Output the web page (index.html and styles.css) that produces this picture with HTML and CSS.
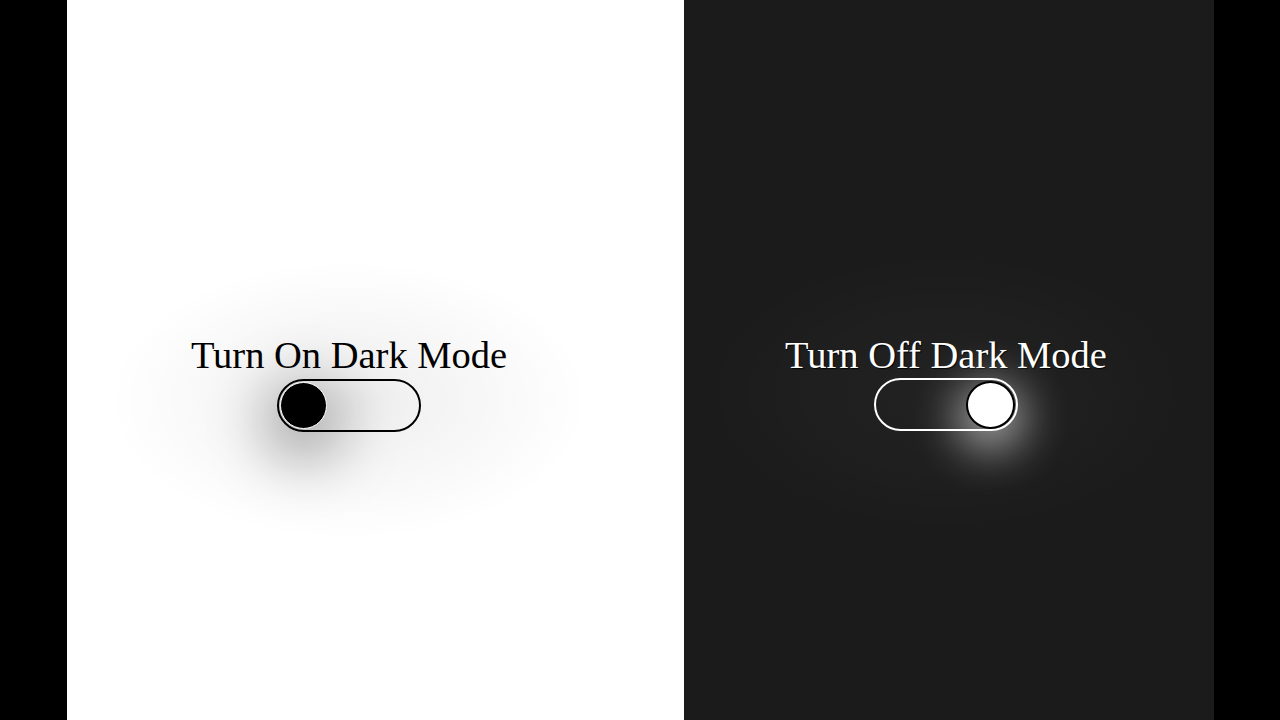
FILE: index.html
```html
<!DOCTYPE html>
<html>
<head>
<meta charset="utf-8">
<link rel="stylesheet" href="styles.css">
</head>
<body>
<div class="stage">
  <section class="panel light">
    <div class="box">
      <div class="label">Turn On Dark Mode</div>
      <div class="track"><div class="knob"></div></div>
    </div>
  </section>
  <section class="panel dark">
    <div class="box">
      <div class="label">Turn Off Dark Mode</div>
      <div class="track"><div class="knob"></div></div>
    </div>
  </section>
</div>
</body>
</html>
```
FILE: styles.css
```css
html, body {
  margin: 0;
  padding: 0;
  background: #000;
  width: 1280px;
  height: 720px;
  overflow: hidden;
}
.stage {
  display: flex;
  height: 720px;
  padding-left: 67px;
}
.panel {
  height: 720px;
  display: flex;
  justify-content: center;
  align-items: flex-start;
  padding-top: 335px;
  box-sizing: border-box;
  overflow: hidden;
}
.light {
  width: 617px;
  padding-right: 53px;
  background:
    radial-gradient(ellipse 240px 140px at 282px 400px, rgba(0,0,0,0.07), rgba(0,0,0,0.03) 55%, rgba(0,0,0,0) 100%),
    #fff;
}
.dark {
  width: 530px;
  padding-right: 6px;
  background:
    radial-gradient(ellipse 240px 140px at 262px 392px, rgba(255,255,255,0.03), rgba(255,255,255,0.015) 60%, rgba(255,255,255,0) 100%),
    #1b1b1b;
}
.box {
  display: flex;
  flex-direction: column;
  align-items: center;
}
.label {
  font-family: "Liberation Serif", "Times New Roman", serif;
  font-size: 38.5px;
  line-height: 41px;
  white-space: nowrap;
}
.light .label { color: #000; }
.dark .label {
  color: #fff;
  text-shadow: 1px 1px 1px rgba(0,0,0,0.9);
}
.track {
  margin-top: 3px;
  width: 144px;
  height: 53px;
  box-sizing: border-box;
  border-radius: 27px;
  display: flex;
  align-items: center;
  padding: 0 1px;
}
.light .track {
  border: 2px solid #000;
  justify-content: flex-start;
}
.dark .track {
  border: 2px solid #fff;
  justify-content: flex-end;
  margin-top: 2px;
}
.knob {
  width: 47px;
  height: 47px;
  border-radius: 50%;
  box-sizing: border-box;
}
.light .knob {
  background: #000;
  border: 1.5px solid #fff;
  box-shadow: 0 16px 60px 14px rgba(0,0,0,0.36);
}
.dark .knob {
  width: 49px;
  height: 48px;
  background: #fff;
  border: 2px solid #000;
  box-shadow: 0 12px 45px 10px rgba(255,255,255,0.6);
}
```
